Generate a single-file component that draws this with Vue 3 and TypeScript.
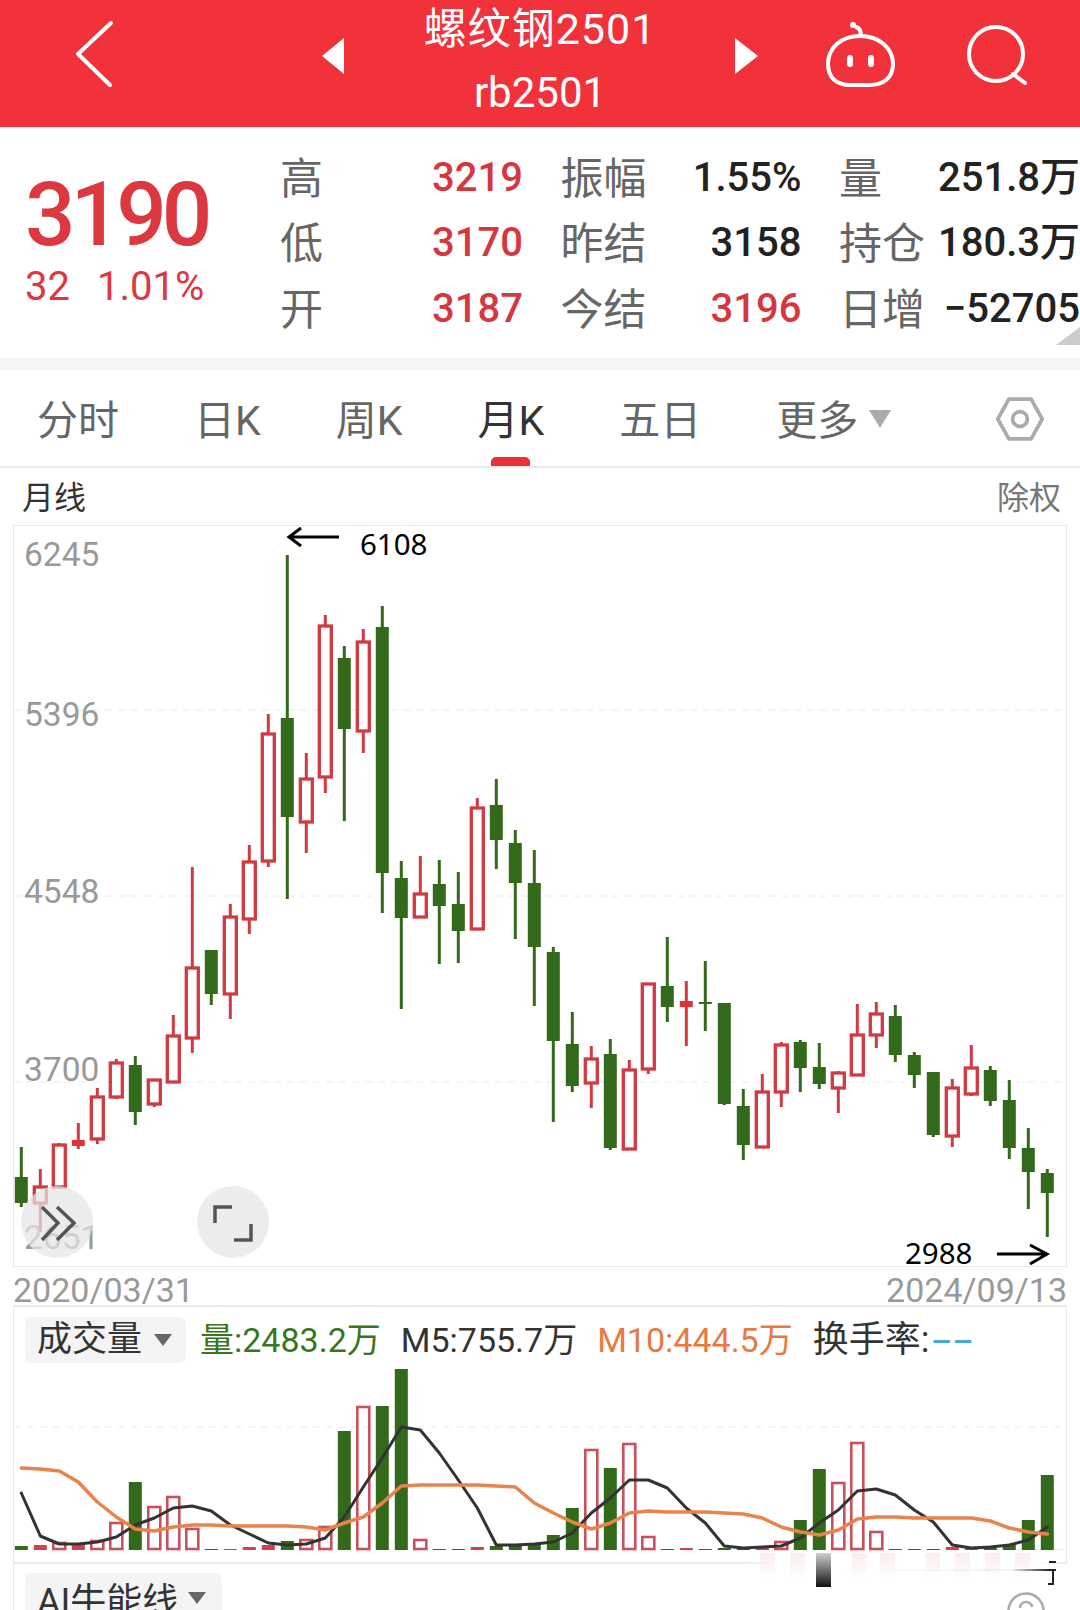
<script setup lang="ts">
interface Candle { x: number; top: number; open: number; close: number; bot: number; up: boolean }
interface Bar { x: number; y: number; up: boolean }

// wick top, body top, body bottom, wick bottom, 1 = red
const raw: number[][] = [
  [1147,1177,1203,1207,0],[1169,1187,1203,1232,1],[1143,1145,1187,1187,1],[1123,1140,1146,1149,1],
  [1088,1097,1139,1144,1],[1059,1063,1097,1099,1],[1056,1065,1112,1125,0],[1079,1080,1104,1107,1],
  [1015,1036,1082,1083,1],[867,968,1038,1053,1],[950,950,994,1005,0],[904,917,994,1019,1],
  [845,862,919,934,1],[714,734,861,867,1],[555,718,817,899,0],[753,779,822,853,1],
  [615,626,777,793,1],[646,658,729,821,0],[629,642,731,753,1],[606,627,873,913,0],
  [861,878,918,1009,0],[856,894,917,918,1],[860,884,906,964,0],[872,904,931,963,0],
  [798,808,929,929,1],[779,805,840,869,0],[830,843,883,939,0],[850,883,947,1006,0],
  [947,952,1041,1122,0],[1012,1044,1086,1092,0],[1046,1059,1083,1108,1],[1039,1054,1148,1150,0],
  [1060,1070,1149,1149,1],[983,984,1069,1074,1],[937,986,1007,1022,0],[981,1001,1007,1046,1],
  [961,1002,1004,1031,0],[1003,1003,1104,1105,0],[1089,1106,1145,1160,0],[1074,1092,1147,1147,1],
  [1042,1045,1092,1107,1],[1040,1042,1068,1092,0],[1043,1067,1084,1089,0],[1071,1073,1088,1113,1],
  [1004,1035,1075,1075,1],[1002,1014,1035,1048,1],[1005,1016,1055,1062,0],[1052,1055,1075,1088,0],
  [1072,1072,1135,1137,0],[1079,1088,1136,1147,1],[1045,1068,1094,1096,1],[1066,1070,1101,1106,0],
  [1080,1100,1148,1159,0],[1128,1148,1172,1209,0],[1169,1173,1193,1237,0],
]
const xAt = (i: number) => 21.3 + 19 * i

const candles: Candle[] = raw.map((r, i) => ({
  x: xAt(i), top: r[0], open: r[1], close: r[2], bot: r[3], up: r[4] === 1,
}))

const volTops = [
  1546,1545,1543,1544,1541,1523,1482,1507,1497,1529,1549,1549,1547,1545,1541,1540,1527,1431,1407,1406,
  1369,1540,1549,1549,1547,1546,1545,1543,1535,1508,1450,1468,1444,1537,1549,1548,1549,1548,1547,1546,
  1542,1520,1469,1483,1443,1532,1549,1549,1549,1547,1548,1547,1545,1520,1475,
]
const bars: Bar[] = volTops.map((y, i) => ({ x: xAt(i), y, up: raw[i][4] === 1 }))

const m5 = [1493,1536,1544,1544,1542,1537,1525,1518,1508,1506,1511,1525,1534,1543,1545,1544,1538,1517,1487,1458,
  1427,1430,1453,1480,1508,1545,1545,1544,1542,1533,1513,1498,1480,1480,1488,1508,1523,1546,1548,1547,1546,1538,
  1523,1510,1491,1489,1495,1510,1522,1545,1548,1547,1545,1540,1527]
const m10 = [1468,1469,1471,1482,1502,1517,1529,1531,1527,1525,1525,1526,1526,1526,1526,1527,1530,1523,1517,1503,
  1486,1485,1485,1485,1485,1486,1487,1503,1513,1522,1529,1523,1513,1511,1512,1512,1512,1513,1514,1518,1527,1532,
  1535,1530,1519,1517,1517,1518,1518,1518,1518,1521,1528,1532,1534]
const toLine = (ys: number[]) => ys.map((y, i) => `${xAt(i)},${y}`).join(" ")

const yLabels = [
  { t: "6245", y: 566 }, { t: "5396", y: 726 }, { t: "4548", y: 903 }, { t: "3700", y: 1081 }, { t: "2651", y: 1249 },
]
const rows = [
  { a: "高", av: "3219", b: "振幅", bv: "1.55%", bRed: false, c: "量", cv: "251.8万" },
  { a: "低", av: "3170", b: "昨结", bv: "3158", bRed: false, c: "持仓", cv: "180.3万" },
  { a: "开", av: "3187", b: "今结", bv: "3196", bRed: true, c: "日增", cv: "−52705" },
]
const tabs = ["分时", "日K", "周K", "月K", "五日"]
const smears = [760, 790, 852, 880, 925, 955, 985, 1015]
</script>

<template>
  <div class="page">
    <header class="top">
      <svg class="top-icons" viewBox="0 0 1080 127" width="1080" height="127">
        <path d="M111 23 78 54l32 31" class="wht" />
        <path d="M344 38v36l-22-18z" fill="#fff" />
        <path d="M735 38v36l23-18z" fill="#fff" />
        <path class="wht" d="M860 36c-19 0-32 12-32 28 0 14 9 21 22 21h20c13 0 23-7 23-21 0-16-14-28-33-28zM860 36c2-6-1-8-4-9" />
        <circle cx="853" cy="25" r="3" fill="#fff" />
        <rect x="847" y="55" width="6" height="12" rx="3" fill="#fff" />
        <rect x="868" y="55" width="6" height="12" rx="3" fill="#fff" />
        <ellipse class="wht" cx="996" cy="54" rx="27" ry="27" />
        <path class="wht" d="M1013 74l12 9" />
      </svg>
      <div class="title">
        <div class="name">螺纹钢2501</div>
        <div class="code">rb2501</div>
      </div>
    </header>

    <section class="quote">
      <div class="price">
        <div class="now">3190</div>
        <div class="chg"><span>32</span><span>1.01%</span></div>
      </div>
      <div class="stats">
        <template v-for="r in rows" :key="r.a">
          <div class="cell"><span class="lab">{{ r.a }}</span><span class="val red">{{ r.av }}</span></div>
          <div class="cell"><span class="lab">{{ r.b }}</span><span class="val" :class="{ red: r.bRed }">{{ r.bv }}</span></div>
          <div class="cell"><span class="lab">{{ r.c }}</span><span class="val">{{ r.cv }}</span></div>
        </template>
      </div>
      <i class="corner"></i>
    </section>
    <div class="band"></div>

    <nav class="tabs">
      <div v-for="t in tabs" :key="t" class="tab" :class="{ on: t === '月K' }">{{ t }}</div>
      <div class="tab">更多</div>
      <i class="more-tri"></i>
      <svg class="gear" viewBox="0 0 54 49" width="50" height="46">
        <path d="M15 3h24l12 21.500L39 46H15L3 24.500z" fill="none" stroke="#aaa" stroke-width="4" stroke-linejoin="round" />
        <circle cx="27" cy="24.500" r="8" fill="none" stroke="#aaa" stroke-width="4" />
      </svg>
    </nav>

    <div class="sub">
      <span class="sub-l">月线</span>
      <span class="sub-r">除权</span>
    </div>

    <div class="kbox">
      <svg viewBox="14 526 1052 740" width="1052" height="740">
        <line v-for="y in [710, 896, 1082]" :key="y" x1="14" x2="1066" :y1="y" :y2="y" class="grid" />
        <text v-for="l in yLabels" :key="l.t" x="24" :y="l.y" class="ylab">{{ l.t }}</text>
        <g v-for="c in candles" :key="c.x" :class="c.up ? 'red-c' : 'grn-c'">
          <line :x1="c.x" :x2="c.x" :y1="c.top" :y2="c.bot" class="wick" />
          <rect v-if="!c.up || c.close - c.open < 8" :x="c.x - 6.500" :y="c.open" width="13" :height="c.close - c.open" class="solid" />
          <rect v-else :x="c.x - 6" :y="c.open" width="12" :height="c.close - c.open" class="hollow" />
        </g>
        <path class="arrow" d="M339 537h-50M301 528l-12 9 12 9" />
        <text x="360" y="555" class="note">6108</text>
        <text x="905" y="1264" class="note">2988</text>
        <path class="arrow" d="M997 1254h50M1030 1245l17 9-17 10" />
        <circle cx="57" cy="1222" r="36" fill="#e4e4e4" fill-opacity=".72" />
        <circle cx="233" cy="1222" r="36" fill="#ececec" />
        <path class="ico" d="M42 1207l16 16-16 17M57 1207l17 16-17 17" />
        <path class="ico" d="M232 1207h-17v16M234 1240h17v-16" />
      </svg>
    </div>

    <div class="dates"><span>2020/03/31</span><span>2024/09/13</span></div>

    <section class="vol">
      <div class="vol-head">
        <div class="pill">成交量<i class="tri"></i></div>
        <span class="v-g">量:2483.2万</span>
        <span class="v-k">M5:755.7万</span>
        <span class="v-o">M10:444.5万</span>
        <span class="v-k turn">换手率:<b class="dash">--</b></span>
      </div>
      <svg viewBox="14 1369 1052 193" width="1052" height="193">
        <line x1="14" x2="1066" y1="1427" y2="1427" class="grid" />
        <line x1="980" x2="1066" y1="1549.500" y2="1549.500" stroke="#eee" stroke-width="1" />
        <g v-for="b in bars" :key="b.x">
          <rect v-if="!b.up" :x="b.x - 6.500" :y="b.y" width="13" :height="1550 - b.y" fill="#33691a" />
          <rect v-else-if="1550 - b.y < 7" :x="b.x - 6.500" :y="b.y" width="13" :height="1550 - b.y" fill="#d63f4c" />
          <rect v-else :x="b.x - 6" :y="b.y" width="12" :height="1549 - b.y" fill="none" stroke="#c9505c" stroke-width="2.600" />
        </g>
        <polyline :points="toLine(m5)" class="ln" stroke="#333" stroke-width="3" />
        <polyline :points="toLine(m10)" class="ln" stroke="#e8834c" stroke-width="3.500" />
      </svg>
    </section>

    <section class="ai">
      <div class="pill ai-pill">AI牛能线<i class="tri"></i></div>
    </section>
    <svg class="help" viewBox="0 0 40 20" width="40" height="20">
      <circle cx="20" cy="20" r="17.500" fill="none" stroke="#aaa" stroke-width="2.500" />
      <path d="M14 17c0-4 3-6 6-6s6 2 6 5" fill="none" stroke="#aaa" stroke-width="2.500" />
    </svg>

    <!-- ghost of the site watermark over the bottom of the volume panel -->
    <div class="wm">
      <i v-for="s in smears" :key="s" class="smear" :style="{ left: s - 743 + 'px' }"></i>
      <i class="wm-block"></i>
      <i class="wm-l1"></i><i class="wm-l2"></i><i class="wm-l3"></i>
    </div>
  </div>
</template>

<style scoped>
.page {
  position: relative;
  width: 1080px;
  height: 1610px;
  overflow: hidden;
  background: #fff;
  font-family: Roboto, "Noto Sans CJK SC", sans-serif;
  color: #222;
}
.top {
  position: relative;
  height: 127px;
  background: #f1323b;
  color: #fff;
  text-align: center;
}
.top-icons {
  position: absolute;
  left: 0;
  top: 0;
}
.wht {
  fill: none;
  stroke: #fff;
  stroke-width: 4;
  stroke-linecap: round;
  stroke-linejoin: round;
}
.title {
  position: relative;
}
.name {
  font-size: 43px;
  line-height: 58px;
  letter-spacing: 1px;
}
.code {
  font-size: 42px;
  line-height: 50px;
  margin-top: 10px;
}

.quote {
  position: relative;
  display: flex;
  height: 231px;
  overflow: hidden;
}
.price {
  width: 281px;
  padding-left: 25px;
  box-sizing: border-box;
  color: #dc383f;
}
.now {
  font-size: 89px;
  font-weight: 500;
  line-height: 90px;
  letter-spacing: -5px;
  margin-top: 43px;
}
.chg {
  display: flex;
  gap: 27px;
  font-size: 40px;
  line-height: 48px;
  margin-top: 3px;
}
.stats {
  display: grid;
  grid-template-columns: 242px 240px 240px;
  column-gap: 38.500px;
  grid-auto-rows: 65.500px;
  align-items: center;
  padding-top: 18px;
  white-space: nowrap;
}
.cell {
  display: flex;
  justify-content: space-between;
  align-items: center;
  font-size: 40px;
}
.lab {
  font-size: 43px;
  margin: 0 0 6px -1px;
  color: #666;
}
.val {
  font-weight: 500;
  line-height: 48px;
}
.val.red {
  color: #d5373f;
}
.corner {
  position: absolute;
  right: 0;
  bottom: 13px;
  border-style: solid;
  border-width: 0 0 18px 24px;
  border-color: transparent transparent #ccc transparent;
}
.band {
  height: 12px;
  background: #f5f5f5;
}

.tabs {
  position: relative;
  display: flex;
  gap: 75px;
  height: 98px;
  padding-left: 37px;
  box-sizing: border-box;
  border-bottom: 2px solid #eaeaea;
}
.tab {
  position: relative;
  font-size: 41px;
  line-height: 102px;
  color: #666;
}
.tab.on {
  color: #333;
}
.tab.on::after {
  content: "";
  position: absolute;
  left: 14px;
  right: 14px;
  bottom: 0;
  height: 9px;
  border-radius: 5px 5px 0 0;
  background: #e5323a;
}
.more-tri {
  position: absolute;
  left: 869px;
  top: 40px;
  border-style: solid;
  border-width: 18px 11px 0 11px;
  border-color: #aaa transparent transparent transparent;
}
.gear {
  position: absolute;
  left: 995px;
  top: 26px;
}

.sub {
  display: flex;
  justify-content: space-between;
  align-items: center;
  height: 57px;
  padding: 0 19px 4px 22px;
  box-sizing: border-box;
  font-size: 32px;
}
.sub-l {
  color: #333;
}
.sub-r {
  color: #777;
}

.kbox {
  margin: 0 13px;
  height: 742px;
  box-sizing: border-box;
  border: 1px solid #e9e9e9;
}
svg {
  display: block;
  overflow: visible;
}
.grid {
  stroke: #eaeaea;
  stroke-width: 1;
  stroke-dasharray: 7 6;
}
.ylab {
  font-size: 33.500px;
  fill: #999;
  font-family: Roboto, sans-serif;
}
.wick {
  stroke-width: 3;
}
.red-c .wick {
  stroke: #d23a42;
}
.grn-c .wick {
  stroke: #33691a;
}
.red-c .solid {
  fill: #dd3338;
}
.grn-c .solid {
  fill: #33691a;
}
.hollow {
  fill: #fff;
  stroke: #d23a42;
  stroke-width: 3.300;
}
.arrow {
  fill: none;
  stroke: #000;
  stroke-width: 3;
}
.note {
  font-size: 29.500px;
  font-family: "Noto Sans", sans-serif;
  fill: #000;
}
.ico {
  fill: none;
  stroke: #555;
  stroke-width: 3.500;
}

.dates {
  display: flex;
  justify-content: space-between;
  height: 38px;
  padding: 9px 13px 0;
  box-sizing: border-box;
  font-size: 34px;
  line-height: 29px;
  color: #999;
}

.vol {
  height: 259px;
  margin: 0 13px;
  box-sizing: border-box;
  border: 1px solid #e9e9e9;
  border-width: 2px 1px 2px 1px;
}
.vol-head {
  display: flex;
  align-items: center;
  gap: 20px;
  height: 62px;
  padding: 3px 0 0 11px;
  box-sizing: border-box;
  font-size: 34px;
  line-height: 44px;
  white-space: nowrap;
}
.pill {
  position: relative;
  display: flex;
  align-items: center;
  width: 161px;
  height: 46px;
  padding-left: 12px;
  box-sizing: border-box;
  margin-right: -6px;
  border-radius: 7px;
  background: #f4f4f4;
  font-size: 35px;
  color: #333;
}
.tri {
  margin-left: 12px;
  border-style: solid;
  border-width: 12px 9px 0 9px;
  border-color: #666 transparent transparent transparent;
}
.v-g {
  color: #38761d;
}
.v-k {
  color: #333;
}
.v-o {
  color: #e8793f;
}
.turn {
  font-size: 36px;
}
.dash {
  display: inline-block;
  font-size: 34px;
  font-weight: 500;
  color: #4aa8d8;
  margin-left: 2px;
  transform: scaleX(1.85);
  transform-origin: left center;
}
.ln {
  fill: none;
  stroke-linejoin: round;
  stroke-linecap: round;
}

.ai {
  padding: 9px 0 0 11px;
  border-left: 1px solid #e9e9e9;
  margin-left: 13px;
}
.ai-pill {
  width: 197px;
  height: 50px;
  font-size: 36px;
  margin: 0;
}
.ai-pill .tri {
  margin-left: 10px;
}
.help {
  position: absolute;
  left: 1006px;
  top: 1591px;
}

.wm {
  position: absolute;
  left: 743px;
  top: 1553px;
  width: 320px;
  height: 34px;
  background: linear-gradient(90deg, rgba(255, 255, 255, 0), #fff 10%, #fff 92%, rgba(255, 255, 255, .2));
}
.smear {
  position: absolute;
  top: 0;
  width: 15px;
  height: 26px;
  background: linear-gradient(rgba(240, 170, 170, .22), rgba(255, 255, 255, 0));
}
.wm-block {
  position: absolute;
  left: 73px;
  top: 0;
  width: 15px;
  height: 34px;
  background: linear-gradient(rgba(150, 150, 150, .45), #111);
}
.wm-l1 {
  position: absolute;
  right: 7px;
  top: 16px;
  width: 220px;
  height: 2px;
  background: linear-gradient(90deg, rgba(0, 0, 0, 0), rgba(0, 0, 0, .05) 80%, #222 97%);
}
.wm-l2 {
  position: absolute;
  right: 9px;
  top: 17px;
  width: 6px;
  height: 15px;
  border-right: 2px solid #222;
  border-bottom: 2px solid #222;
  box-sizing: border-box;
}
.wm-l3 {
  position: absolute;
  right: 7px;
  top: 8px;
  width: 7px;
  height: 2px;
  background: #222;
}
</style>

<style>
html, body {
  margin: 0;
  background: #fff;
}
</style>
